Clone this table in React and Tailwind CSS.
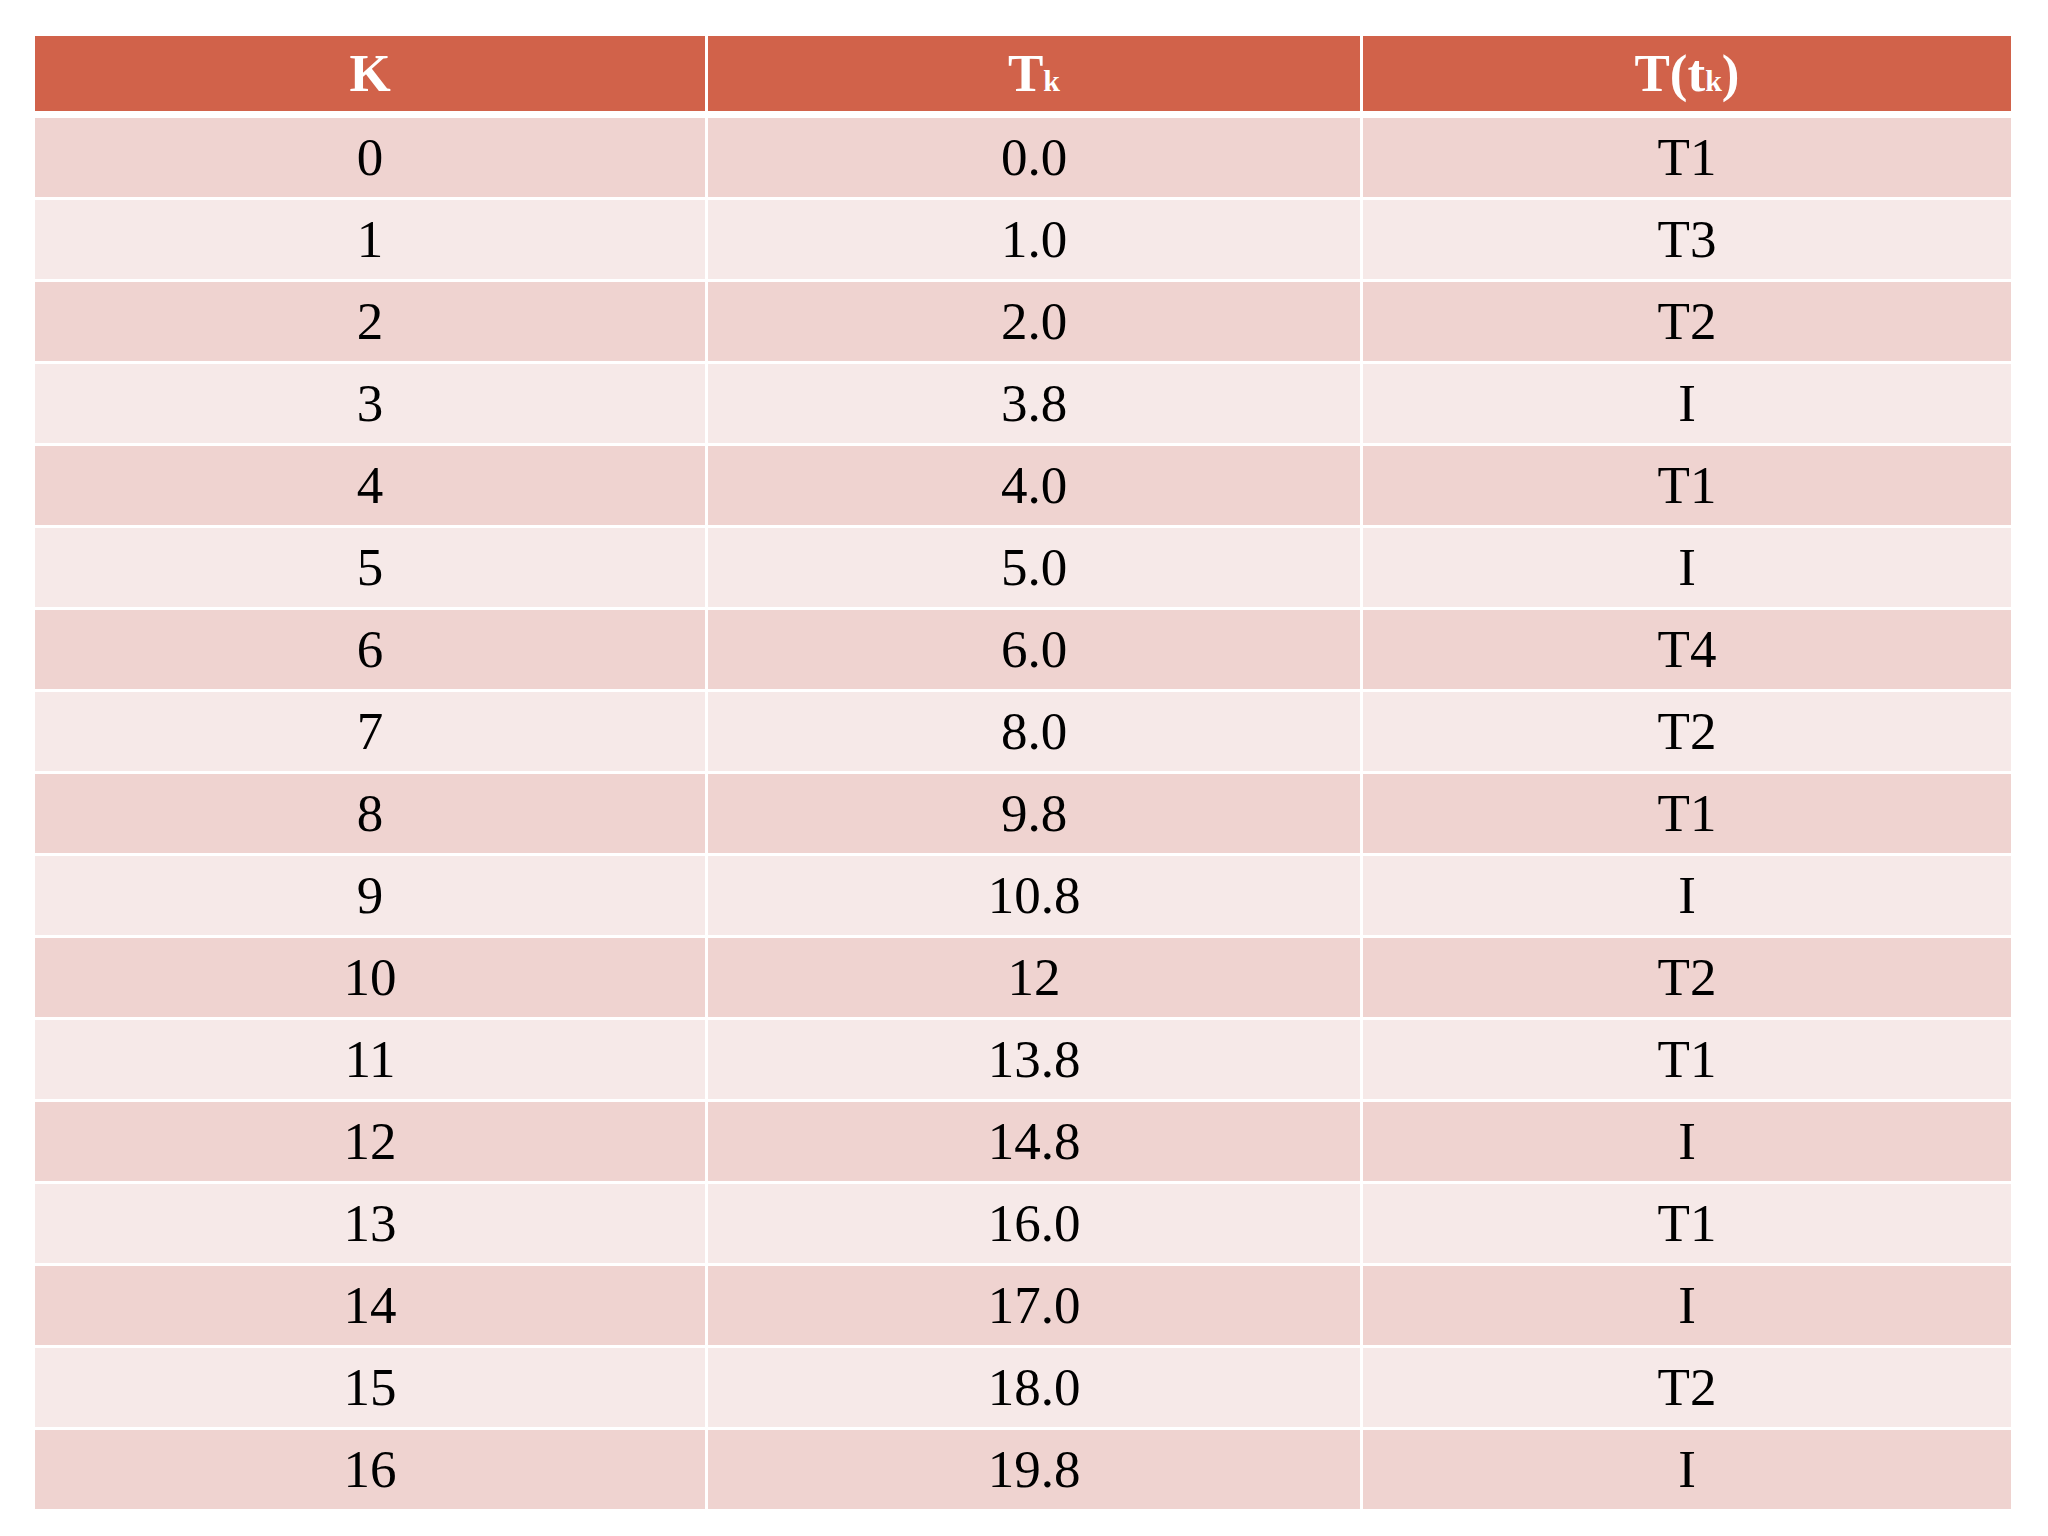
import React from "react";

const rows = [
  ["0", "0.0", "T1"],
  ["1", "1.0", "T3"],
  ["2", "2.0", "T2"],
  ["3", "3.8", "I"],
  ["4", "4.0", "T1"],
  ["5", "5.0", "I"],
  ["6", "6.0", "T4"],
  ["7", "8.0", "T2"],
  ["8", "9.8", "T1"],
  ["9", "10.8", "I"],
  ["10", "12", "T2"],
  ["11", "13.8", "T1"],
  ["12", "14.8", "I"],
  ["13", "16.0", "T1"],
  ["14", "17.0", "I"],
  ["15", "18.0", "T2"],
  ["16", "19.8", "I"],
];

const font = { fontFamily: '"Liberation Serif", "DejaVu Serif", serif' };

export default function App() {
  return (
    <div className="w-[2048px] h-[1536px] bg-white pt-[36px] pl-[35px]" style={font}>
      <div className="w-[1976px] flex flex-col gap-y-[7px]">
        <div className="grid grid-cols-[670px_652px_648px] gap-x-[3px] h-[75px]">
          <div className="bg-[#d1624a] flex items-center justify-center text-white font-bold text-[53px] leading-none">
            K
          </div>
          <div className="bg-[#d1624a] flex items-center justify-center text-white font-bold text-[53px] leading-none">
            <span className="flex items-baseline">
              T<span className="text-[30px]">k</span>
            </span>
          </div>
          <div className="bg-[#d1624a] flex items-center justify-center text-white font-bold text-[53px] leading-none">
            <span className="flex items-baseline">
              T(t<span className="text-[30px]">k</span>)
            </span>
          </div>
        </div>
        <div className="flex flex-col gap-y-[3px]">
          {rows.map((r, i) => (
            <div key={i} className="grid grid-cols-[670px_652px_648px] gap-x-[3px] h-[79px]">
              {r.map((c, j) => (
                <div
                  key={j}
                  className={`${i % 2 === 0 ? "bg-[#efd3d0]" : "bg-[#f6e9e8]"} flex items-center justify-center text-black text-[53px] leading-none oldstyle-nums`}
                >
                  {c}
                </div>
              ))}
            </div>
          ))}
        </div>
      </div>
    </div>
  );
}
